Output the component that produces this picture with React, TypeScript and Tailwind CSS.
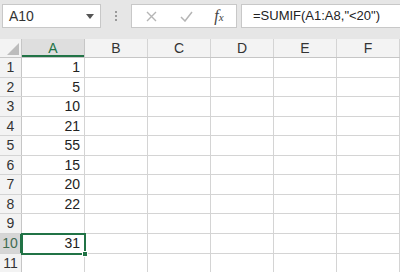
import React from "react";

const cols = ["A", "B", "C", "D", "E", "F"];
const vals: (number | null)[] = [1, 5, 10, 21, 55, 15, 20, 22, null, 31, null];
const heights = ["h-[20px]", "h-[19px]", "h-[20px]", "h-[19px]", "h-[20px]", "h-[19px]", "h-[20px]", "h-[19px]", "h-[20px]", "h-[20px]", "h-[20px]"];

export default function App() {
  return (
    <div className="w-[400px] h-[272px] overflow-hidden bg-white relative" style={{ fontFamily: '"Liberation Sans", Arial, sans-serif' }}>
      {/* formula bar */}
      <div className="h-[39px] bg-[#e6e6e6] flex items-start pt-[4px]">
        <div className="ml-[2px] w-[99px] h-[24px] bg-white border border-[#c8c8c8] flex items-center justify-between pl-[6px] pr-[6px]">
          <span className="text-[14px] text-[#333]">A10</span>
          <svg width="8" height="5" viewBox="0 0 8 5"><path d="M0 0 L8 0 L4 5 Z" fill="#555" /></svg>
        </div>
        <div className="w-[30px] h-[24px] flex flex-col items-center justify-center gap-[2px]">
          <div className="w-[2px] h-[2px] bg-[#9a9a9a]" />
          <div className="w-[2px] h-[2px] bg-[#9a9a9a]" />
          <div className="w-[2px] h-[2px] bg-[#9a9a9a]" />
        </div>
        <div className="w-[106px] h-[24px] bg-white border border-[#c8c8c8] flex items-center">
          <div className="w-[38px] flex justify-center">
            <svg width="11" height="11" viewBox="0 0 11 11"><path d="M1 1 L10 10 M10 1 L1 10" stroke="#b5b5b5" strokeWidth="1.4" /></svg>
          </div>
          <div className="w-[32px] flex justify-center">
            <svg width="13" height="11" viewBox="0 0 13 11"><path d="M1 6 L5 10 L12 1" stroke="#b5b5b5" strokeWidth="1.5" fill="none" /></svg>
          </div>
          <div className="flex-1 flex justify-center">
            <span className="text-[16px] leading-none text-[#444] italic" style={{ fontFamily: '"Liberation Serif", serif' }}>f<span className="text-[11px]">x</span></span>
          </div>
        </div>
        <div className="ml-[4px] flex-1 h-[24px] bg-white border border-[#c8c8c8] border-r-0 flex items-center pl-[11px]">
          <span className="text-[13px] text-[#222]">=SUMIF(A1:A8,"&lt;20")</span>
        </div>
      </div>
      {/* header row */}
      <div className="flex h-[19px] bg-[#f3f3f3] border-b border-[#c6c6c6]">
        <div className="w-[22px] shrink-0 border-r border-[#c6c6c6] relative bg-[#f3f3f3]">
          <svg className="absolute right-[2px] bottom-[2px]" width="12" height="12" viewBox="0 0 12 12"><path d="M12 0 L12 12 L0 12 Z" fill="#bcbcbc" /></svg>
        </div>
        {cols.map((c) => (
          <div
            key={c}
            className={
              c === "A"
                ? "w-[63px] shrink-0 flex items-center justify-center text-[14px] text-[#217346] bg-[#dedede] border-r border-[#c6c6c6] shadow-[inset_0_-2px_0_#217346]"
                : "w-[63px] shrink-0 flex items-center justify-center text-[14px] text-[#333] border-r border-[#d4d4d4]"
            }
          >
            {c}
          </div>
        ))}
      </div>
      {/* rows */}
      {vals.map((v, i) => {
        const sel = i === 9;
        return (
          <div key={i} className={`flex ${heights[i]} border-b border-[#d4d4d4]`}>
            <div
              className={
                sel
                  ? "w-[22px] shrink-0 bg-[#d6d6d6] border-r-2 border-[#217346] flex items-center justify-center text-[14px] text-[#3f6b50]"
                  : "w-[22px] shrink-0 bg-[#f3f3f3] border-r border-[#c6c6c6] flex items-center justify-center text-[14px] text-[#333]"
              }
            >
              {i + 1}
            </div>
            {cols.map((c, j) => (
              <div
                key={c}
                className="w-[63px] shrink-0 border-r border-[#d4d4d4] flex items-center justify-end pr-[4px] text-[14px] text-[#222]"
              >
                {j === 0 && v !== null ? v : ""}
              </div>
            ))}
          </div>
        );
      })}
      {/* selection overlay */}
      <div className="absolute left-[21px] top-[233px] w-[65px] h-[22px] border-2 border-[#217346] pointer-events-none">
        <div className="absolute right-[-4px] bottom-[-4px] w-[6px] h-[6px] bg-[#217346] border border-white" />
      </div>
    </div>
  );
}
